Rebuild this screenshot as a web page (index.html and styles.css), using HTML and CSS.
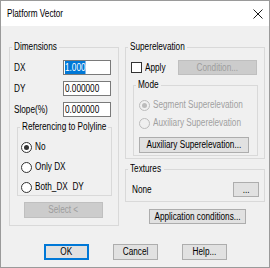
FILE: index.html
```html
<!DOCTYPE html>
<html>
<head>
<meta charset="utf-8">
<link rel="stylesheet" href="styles.css">
</head>
<body>
<div class="win">
  <div class="titlebar">
    <span class="t">Platform Vector</span>
    <svg class="close" width="10" height="10" viewBox="0 0 10 10"><path d="M0.5 0.5L9.5 9.5M9.5 0.5L0.5 9.5" stroke="#1a1a1a" stroke-width="1" fill="none"/></svg>
  </div>
  <div class="body">
    <div class="cols">
      <fieldset class="grp dims">
        <legend class="lg-dims"><span class="t">Dimensions</span></legend>
        <div class="in">
          <div class="row"><label><span class="t">DX</span></label><div class="edit"><span class="t hl">1.000</span></div></div>
          <div class="row"><label><span class="t">DY</span></label><div class="edit"><span class="t">0.000000</span></div></div>
          <div class="row last"><label><span class="t">Slope(%)</span></label><div class="edit"><span class="t">0.000000</span></div></div>
          <fieldset class="grp ref">
            <legend class="lg-ref"><span class="t">Referencing to Polyline</span></legend>
            <div class="in">
              <div class="radio"><span class="rb on"></span><span class="t">No</span></div>
              <div class="radio"><span class="rb"></span><span class="t">Only DX</span></div>
              <div class="radio last"><span class="rb"></span><span class="t">Both_DX&nbsp; DY</span></div>
            </div>
          </fieldset>
          <div class="btn dis select"><span class="t">Select &lt;</span></div>
        </div>
      </fieldset>
      <div class="right">
        <fieldset class="grp super">
          <legend class="lg-super"><span class="t">Superelevation</span></legend>
          <div class="in">
            <div class="apply">
              <span class="cb"></span><span class="t">Apply</span>
              <div class="btn dis cond"><span class="t">Condition...</span></div>
            </div>
            <fieldset class="grp mode">
              <legend class="lg-mode"><span class="t">Mode</span></legend>
              <div class="in">
                <div class="radio dis r1"><span class="rb on"></span><span class="t">Segment Superelevation</span></div>
                <div class="radio dis r2"><span class="rb"></span><span class="t">Auxiliary Superelevation</span></div>
                <div class="btn aux"><span class="t">Auxiliary Superelevation...</span></div>
              </div>
            </fieldset>
          </div>
        </fieldset>
        <fieldset class="grp tex">
          <legend class="lg-tex"><span class="t">Textures</span></legend>
          <div class="in">
            <span class="t">None</span>
            <div class="btn dots"><span class="t">...</span></div>
          </div>
        </fieldset>
        <div class="btn app"><span class="t">Application conditions...</span></div>
      </div>
    </div>
    <div class="actions">
      <div class="btn ok"><span class="t">OK</span></div>
      <div class="btn"><span class="t">Cancel</span></div>
      <div class="btn"><span class="t">Help...</span></div>
    </div>
  </div>
</div>
</body>
</html>
```
FILE: styles.css
```css
* { box-sizing: border-box; }
html, body { margin: 0; padding: 0; background: #f0f0f0; }
body {
  font: 10px/12px "Liberation Sans", Arial, sans-serif;
  color: #000;
}
.t {
  display: inline-block;
  white-space: nowrap;
  transform: scaleX(0.82);
  transform-origin: 0 50%;
}
.win {
  width: 270px;
  height: 268px;
  border: 1px solid #9a9a9a;
  background: #f0f0f0;
  display: flex;
  flex-direction: column;
  overflow: hidden;
}
.titlebar {
  height: 25px;
  flex: none;
  background: #fff;
  display: flex;
  align-items: center;
  justify-content: space-between;
  padding: 0 6px;
}
.body {
  flex: none;
  padding: 15px 3px 0 8px;
}
.cols {
  display: flex;
  gap: 6px;
  align-items: flex-start;
}
.grp {
  margin: 0;
  padding: 0;
  border: 1px solid #d9d9d9;
  min-width: 0;
}
legend {
  padding: 0 2px;
  margin-left: 2px;
  line-height: 12px;
}
.lg-dims { width: 47px; }
.lg-ref { width: 88px; }
.lg-super { width: 59px; }
.lg-mode { width: 25px; }
.lg-tex { width: 36px; }
.dims { width: 110px; }
.dims > .in { padding: 7px 0 7px 4px; }
.row {
  display: flex;
  align-items: center;
  height: 15px;
  margin-bottom: 6px;
}
.row.last { margin-bottom: 4px; }
.row label { width: 49px; flex: none; }
.edit {
  width: 48px;
  height: 15px;
  border: 1px solid #7a7a7a;
  background: #fff;
  padding-left: 1px;
  line-height: 13px;
  white-space: nowrap;
  overflow: hidden;
}
.hl { background: #0078d7; color: #fff; line-height: 13px; }
.ref { width: 95px; margin-left: 3px; }
.ref > .in { padding: 7px 0 1px 3px; }
.radio {
  display: flex;
  align-items: center;
  gap: 3px;
  height: 14px;
  margin-bottom: 6px;
  white-space: nowrap;
}
.radio.last { margin-bottom: 0; }
.rb {
  flex: none;
  width: 11px;
  height: 11px;
  border-radius: 50%;
  border: 1px solid #333;
  background: #fff;
  display: flex;
  align-items: center;
  justify-content: center;
}
.rb.on::after {
  content: "";
  width: 5px;
  height: 5px;
  border-radius: 50%;
  background: #333;
}
.radio.dis { color: #a0a0a0; }
.radio.dis .rb { border-color: #bcbcbc; background: #f0f0f0; }
.radio.dis .rb.on::after { background: #bcbcbc; }
.btn {
  flex: none;
  height: 16px;
  border: 1px solid #adadad;
  background: #e1e1e1;
  display: flex;
  align-items: center;
  justify-content: center;
  white-space: nowrap;
}
.btn .t { transform-origin: 50% 50%; }
.btn.dis {
  background: #cccccc;
  border-color: #bfbfbf;
  color: #9d9d9d;
}
.select { width: 79px; margin: 6px 0 0 10px; }
.right { width: 140px; }
.super > .in { padding: 7px 5px 2px 5px; }
.apply {
  display: flex;
  align-items: center;
  height: 15px;
}
.cb {
  flex: none;
  width: 11px;
  height: 11px;
  border: 1px solid #333;
  background: #fff;
  margin-right: 3px;
}
.cond { width: 79px; height: 15px; margin-left: auto; margin-right: 2px; }
.mode { width: 125px; margin-top: 4px; margin-left: 2px; }
.mode > .in { padding: 7px 0 2px 5px; }
.mode .r1 { margin-bottom: 4px; }
.mode .r2 { margin-bottom: 7px; }
.aux { width: 110px; }
.tex { margin-top: 4px; }
.tex > .in {
  display: flex;
  align-items: center;
  justify-content: space-between;
  padding: 7px 5px 4px 6px;
}
.dots { width: 26px; height: 15px; }
.app { width: 97px; height: 15px; margin: 7px 0 0 24px; }
.actions {
  display: flex;
  gap: 24px;
  margin-top: 18px;
  padding-left: 35px;
}
.actions .btn { width: 45px; }
.btn.ok { border: 2px solid #0078d7; }
```
